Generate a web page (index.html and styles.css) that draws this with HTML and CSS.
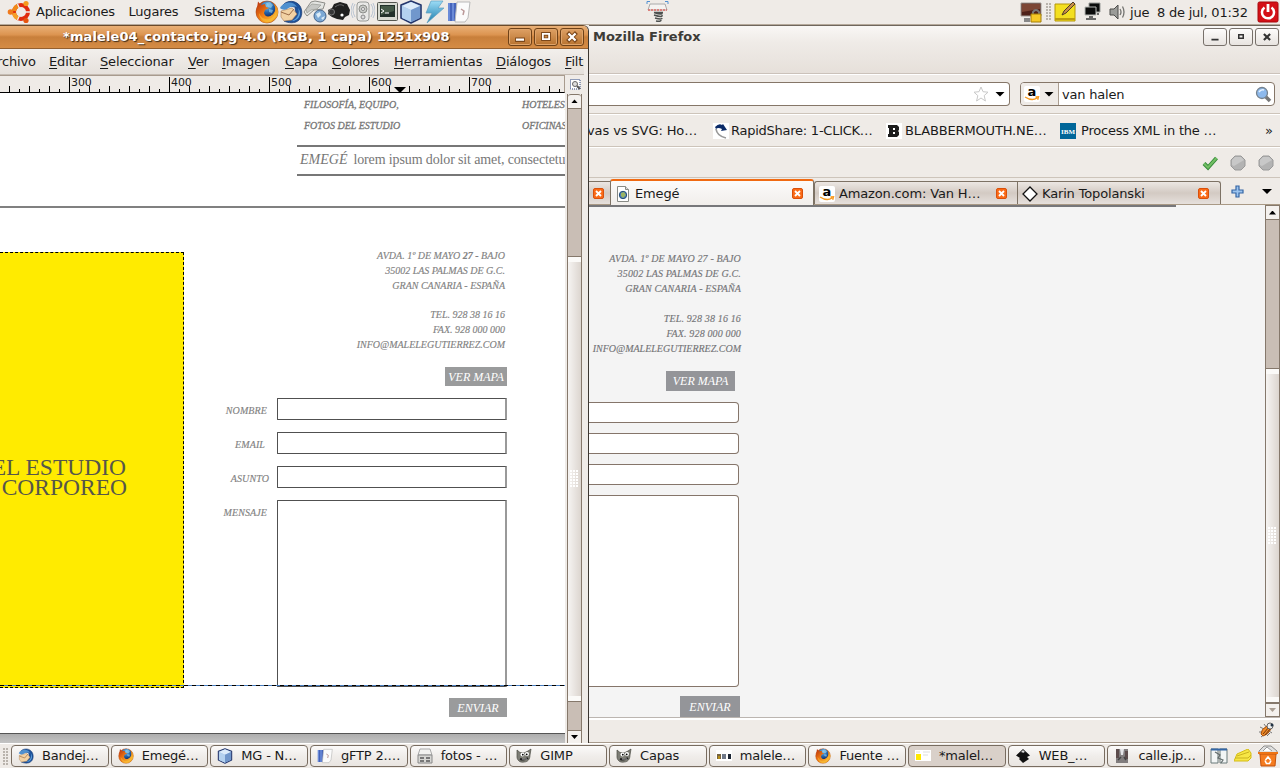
FILE: index.html
```html
<!DOCTYPE html>
<html lang="es">
<head>
<meta charset="utf-8">
<title>Escritorio</title>
<link rel="stylesheet" href="styles.css">
</head>
<body>
<svg class="defs" aria-hidden="true">
  <defs>
    <radialGradient id="g-globe" cx=".45" cy=".3" r=".7"><stop offset="0" stop-color="#78c5f0"/><stop offset=".6" stop-color="#2365ad"/><stop offset="1" stop-color="#12306e"/></radialGradient>
    <linearGradient id="g-fox" x1="0" y1="0" x2="1" y2="1"><stop offset="0" stop-color="#b52d0c"/><stop offset=".45" stop-color="#ee7a14"/><stop offset=".8" stop-color="#f5b32e"/><stop offset="1" stop-color="#d24d08"/></linearGradient>
    <linearGradient id="g-bolt" x1="0" y1="0" x2="0" y2="1"><stop offset="0" stop-color="#9cdcf6"/><stop offset="1" stop-color="#1c7cab"/></linearGradient>
  </defs>
  <symbol id="i-firefox" viewBox="0 0 24 24">
    <circle cx="12" cy="12" r="11" fill="url(#g-fox)" stroke="#a6400f" stroke-width=".6"/>
    <circle cx="12.500" cy="9" r="7.800" fill="url(#g-globe)"/>
    <path d="M11 3l4-1 3 3-2 3-3-1zM14 9l4 1-1 3-3-1z" fill="#9ed5ef" opacity=".6"/>
    <path d="M2 8L3 1.500l3 3.500 4-1 1 3 3 1-4 2-1 3c1 4 5 5 8 2 3-2 4-5 3-10 4 4 4 10 0 14-4 4-11 5-15 1-3-3-4-7-3-12z" fill="url(#g-fox)"/>
    <path d="M4 13c2 5 6 7 10 6 4-1 6-4 7-8 1 7-4 11-9 11-4 0-8-4-8-9z" fill="#f8ba38" opacity=".7"/>
  </symbol>
  <symbol id="i-thunder" viewBox="0 0 24 24">
    <path d="M4 5c4-5 13-5 17 1 3 5 2 11-1 14-4 4-11 3-15 1l8-3 4-4-1-7z" fill="#1f539b" stroke="#12336d" stroke-width=".7"/>
    <path d="M2 11l11-3 5 6-5 6-8 1-3-4z" fill="#f2d2a4" stroke="#a77a52" stroke-width=".6"/>
    <path d="M2 12l8 3 5-6" fill="none" stroke="#9c6b46"/>
    <path d="M1 8c3-6 13-8 17-1-5-1-7 0-10 2-2 1-5 1-7-1z" fill="#4f90cf"/>
    <path d="M19 8c2 5 0 10-6 13 6 0 11-7 6-13z" fill="#5fa3df"/>
  </symbol>
  <symbol id="i-cube" viewBox="0 0 24 24">
    <path d="M12 1l10 4v13l-10 5L2 18V5z" fill="#a9c5e8" stroke="#25376d" stroke-width="1.600" stroke-linejoin="round"/>
    <path d="M12 2l9 4-9 4-9-4z" fill="#dcebfa"/><path d="M12 10l9-4v12l-9 4z" fill="#7197cc"/><path d="M3 6l9 4v12l-9-4z" fill="#b4d1ef"/>
  </symbol>
  <symbol id="i-gftp" viewBox="0 0 24 24">
    <path d="M1 3h12v18H1z" fill="#6b8bd8"/><path d="M4 3v18M8 3v18" stroke="#3e5cb5" stroke-width="1.600"/>
    <path d="M10 2h13l-2 16-3 4H8z" fill="#fbfbfb" stroke="#b9b9b9"/><path d="M14 9l3 2-1 4" fill="none" stroke="#b99" stroke-width="1.500"/>
  </symbol>
  <symbol id="i-gimp" viewBox="0 0 16 16">
    <path d="M1 2l3 2.500L8 5l4-2 3-2-1 6c0 4-2 7-6 7-4 1-7-2-7-5z" fill="#7d7d75" stroke="#4a4a44" stroke-width=".7"/>
    <circle cx="6.500" cy="6.500" r="2" fill="#fff"/><circle cx="11" cy="6" r="2" fill="#fff"/><circle cx="6.800" cy="6.700" r=".9"/><circle cx="10.700" cy="6.300" r=".9"/>
    <path d="M4 11q4 1.500 8-1" stroke="#222" stroke-width="2" fill="none"/><path d="M6 11h5" stroke="#ccc" stroke-width=".8"/>
  </symbol>
  <symbol id="i-close" viewBox="0 0 11 11">
    <rect x=".5" y=".5" width="10" height="10" rx="1.500" fill="#fa6a16" stroke="#d9500c"/>
    <path d="M3 3l5 5M8 3L3 8" stroke="#fff" stroke-width="1.900"/>
  </symbol>
  <symbol id="i-amazon" viewBox="0 0 16 16">
    <rect width="16" height="16" rx="2" fill="#fff"/>
    <text x="3.500" y="10" font-family="DejaVu Sans" font-weight="bold" font-size="13">a</text>
    <path d="M1 11q7 4.600 12 1M11.500 11l3-.2-.8 3" fill="none" stroke="#f8991d" stroke-width="1.400"/>
  </symbol>
</svg>

<div class="desktop">
  <header class="panel">
    <svg class="ubuntu" viewBox="0 0 24 24"><circle cx="14" cy="12" r="7" fill="none" stroke="#e02c0e" stroke-width="4"/><path d="M7.100 11a7 7 0 0 1 4-5.400" fill="none" stroke="#f08a17" stroke-width="4"/><path d="M7.100 13a7 7 0 0 0 4 5.400" fill="none" stroke="#f5a128" stroke-width="4"/><path d="M10.500 4l2 4.500M10.500 20l2-4.500M18 12h5" stroke="#efebe7" stroke-width="1.300"/><circle cx="3.500" cy="12" r="2.800" fill="#f0791b"/><circle cx="19" cy="3.500" r="2.600" fill="#f59a1c"/><circle cx="19" cy="20.500" r="2.600" fill="#e6550f"/></svg>
    <nav class="panel-menu"><span>Aplicaciones</span><span>Lugares</span><span>Sistema</span></nav>
    <div class="launchers">
      <svg><use href="#i-firefox"/></svg>
      <svg><use href="#i-thunder"/></svg>
      <svg viewBox="0 0 24 24"><path d="M8 2l4-1 10 2-2 6-9 1-7 6-3-4z" fill="#e3e4e1" stroke="#8c8c88"/><path d="M3 9l6-5 9 1-4 4-6 1-4 3z" fill="#c6c7c4" stroke="#989994" stroke-width=".7"/><circle cx="17" cy="16" r="6" fill="#7ba8d5" stroke="#45648b"/><path d="M13 14l4-2 1 3-3 3zM18 18l4-2-2 4z" fill="#dcecf8"/></svg>
      <svg viewBox="0 0 24 24"><path d="M1 10l4-2 2-4 6-2 7 2 3 6-1 5-4 2-2 3-6-1-5-2-4-3z" fill="#20201f"/><circle cx="4.500" cy="12" r="3" fill="#353535" stroke="#777"/><circle cx="15" cy="15" r="1.600" fill="#fff"/><path d="M8 7q5-4 9-1" stroke="#666" fill="none"/></svg>
      <svg viewBox="0 0 24 24"><rect x="6" y="2" width="12" height="19" rx="3" fill="#e9e9e7" stroke="#999b98"/><circle cx="12" cy="9" r="4" fill="#c8cac6" stroke="#8c8e8a"/><circle cx="12" cy="9" r="1.500" fill="#fff" stroke="#888"/><circle cx="12" cy="17" r="2" fill="#ddd" stroke="#888"/><path d="M4 4Q0 10 4 17M20 4q4 6 0 13M2 3q-4 8 0 15M22 3q4 8 0 15" fill="none" stroke="#a9b9cc" stroke-width=".8"/></svg>
      <svg viewBox="0 0 24 24"><rect x="2.500" y="2.500" width="20" height="18" rx="1" fill="#d8dbd2" stroke="#555750"/><path d="M5 5h15v12H5z" fill="#22312a"/><path d="M6 6h13v5L6 15z" fill="#455a48"/><path d="M6 9l3 2-3 2M10 13h4" stroke="#fff" fill="none"/></svg>
      <svg><use href="#i-cube"/></svg>
      <svg viewBox="0 0 24 24"><path d="M8 1h12l-5 7h6L4 23l5-10H3z" fill="url(#g-bolt)" stroke="#5e9dc0" stroke-width=".7"/></svg>
      <svg><use href="#i-gftp"/></svg>
    </div>
    <svg class="spring" viewBox="0 0 24 24"><path d="M4 4h15l2 6H2z" fill="#f5f3f1" stroke="#aaa"/><path d="M2 10h19" stroke="#df6a64" stroke-width="1.500" stroke-dasharray="2 1"/><path d="M1 4V1.500h3M19 1.500h3V4" fill="none" stroke="#5090d2"/><path d="M8 12.500h9M8 12.500q9 3 8 0M8 15q9 3 8 0M9 18q7 2 7 0M10 21q5 1 5-1" stroke="#4c504f" stroke-width="1.500" fill="none"/></svg>
    <div class="tray">
      <svg class="t-lock" viewBox="0 0 22 22"><path d="M1 2h20v13H1z" fill="#4e2119" stroke="#a09a94"/><path d="M2 3h18v5L2 11z" fill="#7c4534"/><path d="M4 17h6v4H4z" fill="#888"/><path d="M13 14v-3q3-4 6 0v3" fill="none" stroke="#777" stroke-width="2"/><path d="M11 13h10v8H11z" fill="#f5c927" stroke="#a47e09"/></svg>
      <i class="grip"></i>
      <svg class="t-note" viewBox="0 0 22 20"><path d="M1 2h20v17H1z" fill="#f3df20" stroke="#b5960a"/><path d="M1 17h20" stroke="#bd9c0d" stroke-width="2"/><path d="M8 13l2-4L19 0l2 2-9 9z" fill="#c78e49" stroke="#4f3c27"/></svg>
      <svg class="t-net" viewBox="0 0 17 20"><path d="M5 1h11v9H5z" fill="#0b0c0c" stroke="#9a9c99"/><path d="M1 5h11v8H1z" fill="#0b0c0c" stroke="#b5b7b4"/><path d="M5 14h4v2h3v2H2v-2h3zM13 11h2v2h-2z" fill="#6a6a69"/></svg>
      <svg class="t-vol" viewBox="0 0 17 16"><path d="M1 5h4l4-4v14l-4-4H1z" fill="#9b9c99" stroke="#4c4c4a"/><path d="M11 5q2 3 0 6M13.500 2.500q3 5.500 0 11" fill="none" stroke="#737370" stroke-width="1.300"/></svg>
      <span class="clock">jue&nbsp; 8 de jul, 01:32</span>
      <svg class="t-power" viewBox="0 0 22 22"><rect x="1" y="1" width="20" height="20" rx="1.500" fill="#d41017" stroke="#a6090d"/><path d="M7.500 6.500a6 6 0 1 0 7 0" fill="none" stroke="#fff" stroke-width="2.500"/><path d="M11 3v8" stroke="#fff" stroke-width="2.800"/></svg>
    </div>
  </header>

  <main class="workspace">
    <section class="firefox">
      <div class="ff-title"><b>Mozilla Firefox</b>
        <div class="winbtns light">
          <svg viewBox="0 0 24 18"><path d="M8 12h8" stroke="#333" stroke-width="2"/></svg>
          <svg viewBox="0 0 24 18"><path d="M9.500 6.500h5v4h-5z" fill="none" stroke="#333" stroke-width="1.700"/></svg>
          <svg viewBox="0 0 24 18"><path d="M8.500 5.500l7 7M15.500 5.500l-7 7" stroke="#333" stroke-width="2.400"/></svg>
        </div>
      </div>
      <div class="ff-nav">
        <div class="urlbox"><svg class="star" viewBox="0 0 16 16"><path d="M8 1l2 4.700 5 .5-3.800 3.400L12.400 15 8 12l-4.400 3 1.200-5.400L1 6.200l5-.5z" fill="#fff" stroke="#c9c9c9"/></svg><i class="down"></i></div>
        <div class="searchbox"><div class="engine"><svg><use href="#i-amazon"/></svg><i class="down"></i></div><span>van halen</span>
          <svg class="lens" viewBox="0 0 17 17"><path d="M10 10l5 5" stroke="#777" stroke-width="3.500"/><circle cx="7" cy="7" r="5.500" fill="#8db9ec" stroke="#76838f" stroke-width="1.300"/><path d="M4 6q2-3 5-2" stroke="#e5f2ff" stroke-width="1.500" fill="none"/></svg></div>
      </div>
      <div class="ff-bookmarks">
        <span class="bm bm1">vas vs SVG: Ho…</span>
        <span class="bm bm2"><svg viewBox="0 0 16 16"><rect width="16" height="16" fill="#fff"/><path d="M2 4q4-4 7-2l1-1 4 6-6 1 1-2Q5 4 3 6z" fill="#0b2b68"/><path d="M3 6q1 7 10 9" fill="none" stroke="#999" stroke-width="1.700"/></svg>RapidShare: 1-CLICK…</span>
        <span class="bm bm3"><svg viewBox="0 0 16 16"><rect width="16" height="16" fill="#fff"/><path d="M2 2h9l2 2v3l-1 1 1 1v3l-2 2H2v-3h1V5H2z" fill="#1d1d1d"/><path d="M7 5h2v2H7zM7 9h2v2H7z" fill="#fff"/></svg>BLABBERMOUTH.NE…</span>
        <span class="bm bm4"><svg viewBox="0 0 16 16"><rect width="16" height="16" fill="#006699"/><text x="1" y="10.500" font-family="Liberation Serif" font-weight="bold" font-size="7" fill="#fff" textLength="14">IBM</text></svg>Process XML in the …</span>
        <span class="more">»</span>
      </div>
      <div class="ff-tools">
        <svg viewBox="0 0 16 16"><path d="M2 8.500l4 4L14.500 3" fill="none" stroke="#348939" stroke-width="4"/><path d="M2 8.500l4 4L14.500 3" fill="none" stroke="#72bf64" stroke-width="2.200"/></svg>
        <svg viewBox="0 0 16 16"><path d="M5 1h6l4 4v6l-4 4H5l-4-4V5z" fill="#b3b3b3" stroke="#999"/><path d="M5 2h6l3 3-10 6-2-1V5z" fill="#c8c8c8"/></svg>
        <svg viewBox="0 0 16 16"><path d="M5 1h6l4 4v6l-4 4H5l-4-4V5z" fill="#b3b3b3" stroke="#999"/><path d="M5 2h6l3 3-10 6-2-1V5z" fill="#c8c8c8"/></svg>
      </div>
      <div class="ff-tabs">
        <div class="tab stub"><svg class="x"><use href="#i-close"/></svg></div>
        <div class="tab active"><svg class="fav" viewBox="0 0 16 16"><path d="M2.500.5h8l3 3v12h-11z" fill="#fff" stroke="#888a85"/><path d="M10.500.5v3h3" fill="#ddd" stroke="#888a85"/><circle cx="8" cy="9" r="3.700" fill="#4d7fba" stroke="#264e78"/><path d="M6 7l3-1 2 3-3 3-2-2z" fill="#9bb463"/></svg><span>Emegé</span><svg class="x"><use href="#i-close"/></svg></div>
        <div class="tab"><svg class="fav"><use href="#i-amazon"/></svg><span>Amazon.com: Van H…</span><svg class="x"><use href="#i-close"/></svg></div>
        <div class="tab last"><svg class="fav" viewBox="0 0 16 16"><path d="M8 1l7 7-7 7-7-7z" fill="#fff" stroke="#111" stroke-width="1.300"/></svg><span>Karin Topolanski</span><svg class="x"><use href="#i-close"/></svg></div>
        <svg class="plus" viewBox="0 0 13 13"><path d="M5 1h3v4h4v3H8v4H5V8H1V5h4z" fill="#9cc4ef" stroke="#3465a4" stroke-width="1.200"/></svg><i class="down"></i>
      </div>
      <div class="ff-body">
        <div class="page">
          <div class="page-rule"></div>
          <address class="addr web">
            <span>AVDA. 1º DE MAYO 27 - BAJO</span><span>35002 LAS PALMAS DE G.C.</span><span>GRAN CANARIA - ESPAÑA</span><span>&nbsp;</span>
            <span>TEL. 928 38 16 16</span><span>FAX. 928 000 000</span><span class="mail">INFO@MALELEGUTIERREZ.COM</span>
          </address>
          <div class="btn web-map">VER MAPA</div>
          <div class="web-fields"><i></i><i></i><i></i><i class="area"></i></div>
          <div class="btn web-send">ENVIAR</div>
        </div>
        <div class="vbar ff-bar"><div class="arrow up"></div><div class="trough"></div><div class="thumb"></div><div class="arrow dn off"></div></div>
      </div>
      <div class="ff-status"><svg viewBox="0 0 17 16"><path d="M2 5l4 2M1 10l4 0M3 15l4-3M9 14l3-3M6 2l3 4M14 11l-3-2" stroke="#777"/><path d="M3 12q0-5 6-8l4 3q-3 6-8 7z" fill="#f28b25" stroke="#a34e0e"/><path d="M5 12l6-7M7 13l5-6" stroke="#6e3410"/><circle cx="12" cy="4" r="3" fill="#eee" stroke="#666"/><circle cx="14" cy="3" r="1.500" fill="#234"/></svg></div>
    </section>

    <section class="gimp">
      <div class="g-title"><b>*malele04_contacto.jpg-4.0 (RGB, 1 capa) 1251x908</b>
        <div class="winbtns dark">
          <svg viewBox="0 0 24 18"><path d="M6.500 12h11" stroke="#7b471a" stroke-width="5"/><path d="M7.500 12h9" stroke="#fff" stroke-width="2.600"/></svg>
          <svg viewBox="0 0 24 18"><path d="M8.500 5.500h7v6h-7z" fill="none" stroke="#7b471a" stroke-width="4"/><path d="M8.500 5.500h7v6h-7z" fill="none" stroke="#fff" stroke-width="2"/></svg>
          <svg viewBox="0 0 24 18"><path d="M7 4l10 10M17 4L7 14" stroke="#7b471a" stroke-width="4.600"/><path d="M8 5l8 8M16 5l-8 8" stroke="#fff" stroke-width="2.600"/></svg>
        </div>
      </div>
      <nav class="g-menu"><span class="m0">rchivo</span><span class="m1"><u>E</u>ditar</span><span class="m2"><u>S</u>eleccionar</span><span class="m3"><u>V</u>er</span><span class="m4"><u>I</u>magen</span><span class="m5"><u>C</u>apa</span><span class="m6"><u>C</u>olores</span><span class="m7"><u>H</u>erramientas</span><span class="m8"><u>D</u>iálogos</span><span class="m9"><u>F</u>iltros</span></nav>
      <div class="g-main">
        <div class="g-view">
          <div class="ruler"><span>300</span><span>400</span><span>500</span><span>600</span><span>700</span><i class="marker"></i></div>
          <div class="canvas">
            <div class="c-links"><div><p>FILOSOFÍA, EQUIPO,</p><p>FOTOS DEL ESTUDIO</p></div><div><p>HOTELES,</p><p>OFICINAS</p></div></div>
            <div class="c-lorem"><em>EMEGÉ</em><span>lorem ipsum dolor sit amet, consectetur</span></div>
            <div class="c-rule"></div>
            <div class="c-body">
              <div class="yellow"><p>EL ESTUDIO</p><p class="corp">CORPOREO</p></div>
              <div class="c-form">
                <address class="addr">
                  <span>AVDA. 1º DE MAYO <b>27 -</b> BAJO</span><span>35002 LAS PALMAS DE G.C.</span><span>GRAN CANARIA - ESPAÑA</span><span>&nbsp;</span>
                  <span>TEL. 928 38 16 16</span><span>FAX. 928 000 000</span><span>INFO@MALELEGUTIERREZ.COM</span>
                </address>
                <div class="btn g-map">VER MAPA</div>
                <div class="row"><label class="r1">NOMBRE</label><i></i></div>
                <div class="row"><label class="r2">EMAIL</label><i></i></div>
                <div class="row"><label class="r3">ASUNTO</label><i></i></div>
                <div class="row big"><label class="r4">MENSAJE</label><i></i></div>
                <div class="btn g-send">ENVIAR</div>
              </div>
            </div>
            <div class="guide"></div>
          </div>
          <div class="g-pad"></div>
        </div>
        <div class="g-side">
          <svg class="zoomcorner" viewBox="0 0 11 11"><rect x=".5" y=".5" width="9.500" height="9.500" fill="#fff" stroke="#27427e" stroke-dasharray="1 1"/><circle cx="5" cy="5" r="2.500" fill="#ddd" stroke="#666"/><path d="M7 7l3 3" stroke="#555" stroke-width="2"/></svg>
          <div class="vbar"><div class="arrow up"></div><div class="trough"></div><div class="thumb"></div><div class="trough low"></div><div class="arrow dn"></div></div>
        </div>
      </div>
    </section>
  </main>

  <footer class="taskbar">
    <i class="grip"></i>
    <div class="tasks">
      <div class="task"><svg><use href="#i-thunder"/></svg>Bandej…</div>
      <div class="task"><svg><use href="#i-firefox"/></svg>Emegé…</div>
      <div class="task"><svg><use href="#i-cube"/></svg>MG - N…</div>
      <div class="task"><svg><use href="#i-gftp"/></svg>gFTP 2.…</div>
      <div class="task"><svg viewBox="0 0 16 16"><path d="M3 1h10l2 6H1z" fill="#f2f2f0" stroke="#aaa"/><path d="M1 7h14v8H1z" fill="#d6d6d3" stroke="#888"/><path d="M3 9h4v2H3zM9 9h4v2H9zM3 12h4v2H3zM9 12h4v2H9z" fill="#777"/></svg>fotos - …</div>
      <div class="task"><svg><use href="#i-gimp"/></svg>GIMP</div>
      <div class="task"><svg><use href="#i-gimp"/></svg>Capas</div>
      <div class="task"><svg viewBox="0 0 16 16"><path d="M0 2h16v11H0z" fill="#fff"/><path d="M1 6h4v5H1z" fill="#766340"/><path d="M6 6h4v5H6z" fill="#6f7888"/><path d="M12 6h3v5h-3z" fill="#1b2432"/><path d="M2 8h2v3H2z" fill="#b58e17"/></svg>malele…</div>
      <div class="task"><svg><use href="#i-firefox"/></svg>Fuente …</div>
      <div class="task on"><svg viewBox="0 0 16 16"><path d="M0 2h16v11H0z" fill="#fff"/><path d="M1 6h5v6H1z" fill="#ffe800"/><path d="M1 4h4M8 4h7M8 7h5" stroke="#ddd"/></svg>*malel…</div>
      <div class="task"><svg viewBox="0 0 16 16"><path d="M8 1l7 6.500-3 1.500 2 2-6 4-4-4 1-1-4-2.500z" fill="#111"/><path d="M8 2L5.500 4.500 7 4l1 1 1.500-1 1 .5z" fill="#ddd"/></svg>WEB_…</div>
      <div class="task"><svg viewBox="0 0 16 16"><path d="M2 1h12v14H2z" fill="#817d7e"/><path d="M6 1h4l-1 6H7z" fill="#e5e5e8"/><path d="M2 1h3v9H2zM11 3h3v8h-3z" fill="#5c4c4c"/><path d="M4 12l3-3M12 12l-2-3" stroke="#444" stroke-width="1.500"/></svg>calle.jp…</div>
    </div>
    <svg class="a1" viewBox="0 0 18 18"><path d="M1 2h7v14H1zM10 2h7v14h-7z" fill="#f2f5f5" stroke="#6b7a7a"/><path d="M1 2.500h16" stroke="#3466a5" stroke-width="2"/><path d="M5 5l5 3-2 3 5 2-2 3" stroke="#626c6c" stroke-width="1.200" fill="none"/></svg>
    <svg class="a2" viewBox="0 0 18 13"><path d="M3 5L14 0l3 4v5l-3 3H0z" fill="#f7e645" stroke="#d4bd16"/><path d="M1 9h13l3-3M3 7l12-4" stroke="#cbb320" fill="none"/></svg>
    <svg class="a3" viewBox="0 0 20 22"><path d="M1 6l5-5 7 0 6 5v3H1z" fill="#e0e0df" stroke="#8c8c8b"/><path d="M5 6l4-4 5 4" fill="#fff" stroke="#999"/><path d="M2 9h16l-1 12H3z" fill="#f57c20" stroke="#c2520c"/><path d="M0 8h20" stroke="#ed7314" stroke-width="2"/><path d="M7.500 15l2.500-3 2.500 3M13 15.500l-1.500 3H8.500L7 15.500" fill="none" stroke="#fff" stroke-width="1.600"/></svg>
  </footer>
</div>
</body>
</html>
```
FILE: styles.css
```css
* { box-sizing: border-box; }
body { margin: 0; font: 13px/16px "DejaVu Sans", sans-serif; color: #1a1a1a; overflow: hidden; }
p { margin: 0; }
i, address, em { font-style: normal; }
svg { display: block; flex: none; }
.defs { position: absolute; width: 0; height: 0; }
.desktop { width: 1280px; height: 768px; display: flex; flex-direction: column; background: #efebe7; }

/* Top panel */
.panel { height: 25px; display: flex; align-items: center; background: #efebe7; border-bottom: 1px solid #b5a99b; }
.ubuntu { width: 24px; height: 24px; margin-left: 7px; }
.panel-menu { display: flex; flex: none; width: 224px; padding-left: 5px; letter-spacing: -.2px; }
.panel-menu span:nth-child(1) { width: 92.5px; }
.panel-menu span:nth-child(2) { width: 65.5px; }
.launchers { display: flex; width: 216px; }
.launchers svg { width: 24px; height: 24px; }
.spring { width: 24px; height: 24px; margin-left: 175px; }
.tray { margin-left: auto; display: flex; align-items: center; padding-right: 1px; }
.t-lock { width: 22px; height: 22px; }
.tray .grip { margin: 0 3px 0 4px; }
.t-note { width: 22px; height: 20px; }
.t-net { width: 17px; height: 20px; margin-left: 8px; }
.t-vol { width: 17px; height: 16px; margin-left: 8px; }
.clock { width: 127px; margin-left: 4px; padding-top: 1px; white-space: nowrap; letter-spacing: -.22px; }
.t-power { width: 22px; height: 22px; }
.grip { width: 5px; height: 18px; background: radial-gradient(circle at 1px 1px, #b9b3ac 0 .8px, transparent 1px) 0 0/3px 3px; }

.workspace { position: relative; height: 718px; overflow: hidden; }

/* Firefox window */
.firefox { position: absolute; left: 589px; top: 0; width: 691px; height: 718px; display: flex; flex-direction: column; background: #efebe7; border-top: 1px solid #6f665c; }
.firefox > div { flex: none; }
.ff-title { height: 48px; display: flex; padding: 2px 1px 0 4px; background: linear-gradient(#f9f7f5, #efebe7 35%, #e6e0da); border-bottom: 1px solid #cbc2ba; color: #3d3c38; line-height: 18px; }
.winbtns { display: flex; gap: 2px; margin-left: auto; }
.winbtns svg { width: 24px; height: 18px; border-radius: 3px; }
.light svg { border: 1px solid #77706a; background: linear-gradient(#fdfcfb, #e8e4e0); }
.ff-nav { height: 40px; padding: 7px 5px 0 0; display: flex; gap: 10px; border-bottom: 1px solid #cdc4ba; border-top: 1px solid #fff; }
.urlbox { width: 421px; height: 24px; border: solid #857668; border-width: 1px 1px 1px 0; border-radius: 0 4px 4px 0; background: #fff; display: flex; align-items: center; justify-content: flex-end; padding-right: 4px; gap: 6px; }
.star { width: 16px; height: 16px; }
.down { width: 10px; height: 5px; background: #000; clip-path: polygon(0 0, 100% 0, 50% 100%); }
.searchbox { width: 255px; height: 24px; border: 1px solid #857668; border-radius: 4px; background: #fff; display: flex; align-items: center; overflow: hidden; }
.engine { width: 38px; height: 22px; background: #efebe7; border-right: 1px solid #ab9e91; display: flex; align-items: center; gap: 4px; padding-left: 3px; }
.engine svg { width: 16px; height: 16px; }
.searchbox span { padding: 1px 0 0 3px; letter-spacing: -.2px; }
.lens { width: 17px; height: 17px; margin-left: auto; margin-right: 2px; }
.ff-bookmarks { height: 33px; display: flex; align-items: center; padding-top: 1px; border-top: 1px solid #fff; border-bottom: 1px solid #cdc4ba; white-space: nowrap; }
.bm { display: flex; align-items: center; gap: 3px; letter-spacing: -.2px; }
.bm svg { width: 16px; height: 16px; }
.bm1 { width: 124px; text-indent: -2px; overflow: hidden; letter-spacing: -.1px; }
.bm2 { width: 173px; gap: 2px; letter-spacing: -.25px; }
.bm3 { width: 174px; letter-spacing: -.15px; }
.bm4 { width: 205px; gap: 5px; }
.ff-tools { height: 31px; display: flex; justify-content: flex-end; align-items: center; gap: 12px; padding: 1px 6px 0 0; border-top: 1px solid #fff; border-bottom: 1px solid #cdc4ba; }
.ff-tools svg { width: 16px; height: 16px; }
.ff-tabs { height: 27px; display: flex; align-items: flex-end; border-bottom: 1px solid #a99985; }
.tab { width: 203px; height: 23px; display: flex; align-items: center; gap: 4px; padding: 1px 10px 0 4px; border: 1px solid #7d7265; border-width: 1px 0 0 1px; border-radius: 3px 0 0 0; background: linear-gradient(#ece7e3, #d3cac3 50%, #e6e0dc); letter-spacing: -.15px; white-space: nowrap; }
.tab .fav { width: 16px; height: 16px; }
.tab .x { width: 11px; height: 11px; margin-left: auto; }
.tab.stub { width: 21px; border-left: 0; border-radius: 0; }
.tab.active { width: 204px; height: 26px; margin-bottom: -1px; background: linear-gradient(#fcfbfa, #f1eeeb); border-top: 2px solid #f06a12; border-right: 1px solid #7d7265; border-radius: 3px 3px 0 0; }
.tab.last { width: 204px; border-right: 1px solid #7d7265; border-radius: 0 3px 0 0; padding-right: 11px; }
.plus { width: 13px; height: 13px; margin: 0 18px 6px 10px; }
.ff-tabs .down { margin-bottom: 10px; }
.ff-body { height: 513px; display: flex; }
.page { width: 676px; background: #f4f4f4; display: flex; flex-direction: column; overflow: hidden; }
.page > * { flex: none; }
.page-rule { width: 587px; height: 2px; background: #77777a; }
.ff-status { height: 25px; border-top: 2px solid #fff; border-bottom: 1px solid #a79a8c; padding: 2px 5px; display: flex; justify-content: flex-end; box-shadow: 0 -1px #bbb5b0; }
.ff-status svg { width: 17px; height: 16px; }

.addr { display: flex; flex-direction: column; align-items: flex-end; font: italic 10px/14.8px "Liberation Serif", serif; color: #828282; white-space: nowrap; -webkit-text-stroke: .15px #828282; }
.addr.web { width: 152px; margin-top: 44px; line-height: 15px; color: #707175; letter-spacing: .15px; }
.addr .mail { letter-spacing: 0; }
.btn { font: italic 12px/20px "Liberation Serif", serif; color: #fff; background: #949599; text-align: center; white-space: nowrap; }
.web-map { width: 69px; height: 20px; margin: 15px 0 0 77px; }
.web-fields { display: flex; flex-direction: column; gap: 10px; margin-top: 11px; }
.web-fields i { width: 150px; height: 21px; background: #fff; border: 1px solid #85756a; border-left: 0; border-radius: 0 4px 4px 0; }
.web-fields .area { height: 192px; }
.web-send { width: 60px; height: 22px; line-height: 22px; margin: 9px 0 0 91px; }

/* Scrollbars */
.vbar { width: 15px; display: flex; flex-direction: column; border: 1px solid #85786b; border-width: 0 1px; background: #efebe7; }
.arrow { height: 15px; border: 1px solid #85786b; border-width: 1px 0; background: #f4f1ee; display: flex; align-items: center; justify-content: center; }
.arrow::after { content: ""; width: 7px; height: 4px; background: #000; clip-path: polygon(0 100%, 50% 0, 100% 100%); }
.arrow.dn::after { clip-path: polygon(0 0, 50% 100%, 100% 0); }
.arrow.off::after { background: #a99e93; }
.trough { background: #c9beb5; }
.thumb { border: 1px solid #85786b; border-width: 1px 0; background: linear-gradient(#fbfaf8, #fbfaf8) 0 0/100% 5px no-repeat, linear-gradient(#fbfaf8, #fbfaf8) 0 100%/100% 5px no-repeat, linear-gradient(90deg, #f6f4f2, #dcd5cf); display: flex; align-items: center; justify-content: center; }
.thumb::after { content: ""; width: 9px; height: 18px; background: radial-gradient(circle at 1px 1px, #fff 0 .9px, #c5bcb3 1px, transparent 1.5px) 0 0/3px 3px; }
.ff-bar .trough { height: 148px; }
.ff-bar .thumb { height: 335px; }
.ff-bar .arrow.off { height: 14px; }

/* GIMP window */
.gimp { position: absolute; left: 0; top: 0; width: 589px; height: 718px; background: #efebe7; border-right: 1px solid #3b3631; border-top: 1px solid #6b4a2a; border-top-right-radius: 6px; display: flex; flex-direction: column; overflow: hidden; }
.g-title { height: 23px; display: flex; padding: 2px 4px 0 63px; background: linear-gradient(#e9b077, #dc9450 40%, #c87f3b 50%, #d58c45); border-bottom: 1px solid #94602f; color: #fff; line-height: 18px; white-space: nowrap; text-shadow: 1px 1px 1px #3a2a1a; letter-spacing: .11px; }
.dark svg { border: 1px solid #6f4218; background: linear-gradient(#dea064, #b8732f); box-shadow: inset 0 0 0 1px #dfa46b; }
.g-menu { height: 26px; display: flex; padding-top: 5px; border-bottom: 1px solid #c5bcb3; background: linear-gradient(#f2efec, #e6e1dc); white-space: nowrap; letter-spacing: -.15px; width: 584px; overflow: hidden; }
.g-menu u { text-underline-offset: 2px; text-decoration-thickness: 1px; }
.g-menu span { flex: none; }
.m0 { width: 49px; text-indent: -3px; } .m1 { width: 51px; } .m2 { width: 88px; } .m3 { width: 34px; } .m4 { width: 63px; }
.m5 { width: 47px; } .m6 { width: 62px; } .m7 { width: 102px; letter-spacing: 0; } .m8 { width: 69px; }
.g-main { height: 668px; display: flex; }
.g-view { width: 565px; display: flex; flex-direction: column; }
.ruler { position: relative; height: 18px; display: flex; padding-left: 71px; border-top: 1px solid #a89b8e; border-right: 1px solid #a89b8e; border-bottom: 1px solid #000; font-size: 11px; line-height: 13px; letter-spacing: -.1px; overflow: hidden;
  background: linear-gradient(90deg, #000 1px, transparent 0) 69px 1px/100px 16px repeat-x, linear-gradient(90deg, #000 1px, transparent 0) 9px 10px/20px 7px repeat-x, linear-gradient(90deg, #000 1px, transparent 0) 19px 13px/20px 4px repeat-x, #efebe7; }
.ruler span { width: 100px; flex: none; }
.marker { position: absolute; left: 394px; top: 11px; width: 12px; height: 6px; background: #000; clip-path: polygon(0 0, 100% 0, 50% 100%); }
.canvas { position: relative; height: 640px; background: #fff; overflow: hidden; font-family: "Liberation Serif", serif; color: #777; }
.g-pad { height: 10px; border-top: 1px solid #555; background: linear-gradient(#adadad, #c4c4c4); }
.c-links { display: flex; padding: 1px 0 0 304px; height: 52px; font: italic 10px/21px "Liberation Serif", serif; white-space: nowrap; color: #777; -webkit-text-stroke: .3px #777; }
.c-links > div:first-child { width: 218px; flex: none; }
.c-lorem { margin-left: 297px; height: 31px; border-top: 2px solid #777; border-bottom: 2px solid #777; padding-left: 3px; display: flex; gap: 6px; font-size: 14px; line-height: 25px; white-space: nowrap; letter-spacing: -.13px; }
.c-lorem em { font-style: italic; letter-spacing: 0; }
.c-rule { height: 2px; margin-top: 30px; background: #808080; }
.c-body { display: flex; }
.yellow { width: 184px; height: 436px; margin-top: 44px; background: #ffeb00; padding: 204px 57px 0 0; font-size: 23.5px; line-height: 20px; color: #57564a; display: flex; flex-direction: column; align-items: flex-end; white-space: nowrap; border: 1px dashed #000; border-left: 0; }
.yellow .corp { margin-right: -1px; }
.c-form { width: 323px; display: flex; flex-direction: column; align-items: flex-end; padding-top: 41px; }
.c-form .addr { padding-right: 2px; }
.c-form > * { flex: none; }
.g-map { width: 62px; height: 19px; line-height: 20px; margin: 14px 0 12px; background: #9a9b9c; }
.row { width: 284px; height: 22px; display: flex; margin-bottom: 12px; font: italic 10px/25px "Liberation Serif", serif; color: #828282; letter-spacing: .1px; -webkit-text-stroke: .15px #828282; }
.row i { width: 230px; height: 22px; flex: none; border: 1px solid #505050; border-right: 2px solid #999; border-radius: 1px; background: #fff; }
.row label { flex: none; width: 54px; text-align: right; padding-right: 10px; }
.row .r2 { padding-right: 12px; } .row .r3 { padding-right: 8px; }
.row.big, .row.big i { height: 187px; margin-bottom: 0; }
.g-send { width: 58px; height: 19px; margin-top: 11px; background: #9a9b9c; }
.guide { position: absolute; left: 0; right: 0; top: 592px; height: 1px; background: repeating-linear-gradient(90deg, #000 0 4px, #4a7fc0 4px 8px); }
.g-side { width: 23px; padding: 5px 0 0 2px; display: flex; flex-direction: column; }
.zoomcorner { width: 11px; height: 11px; margin: -1px 0 4px 3px; }
.g-side .vbar { height: 649px; }
.g-side .arrow.up { border-radius: 3px 3px 0 0; height: 15px; }
.g-side .trough { height: 147px; }
.g-side .thumb { height: 448px; }
.g-side .trough.low { height: 28px; }
.g-side .arrow.dn { height: 13px; border-bottom: 0; }

/* Taskbar */
.taskbar { height: 25px; display: flex; align-items: flex-start; border-top: 1px solid #fff; background: #efebe7; padding: 1px 0 0 3px; }
.taskbar .grip { margin-top: 3px; }
.tasks { display: flex; gap: 2px; width: 1194px; margin-left: 3px; }
.task { flex: 1 1 0; min-width: 0; height: 22px; display: flex; align-items: center; gap: 8px; padding-left: 6px; border: 1px solid #786c60; border-radius: 4px; background: linear-gradient(#fbfaf9, #f0edea 50%, #e9e5e1); white-space: nowrap; letter-spacing: -.2px; }
.task.on { background: #d9d0c9; }
.task svg { width: 16px; height: 16px; }
.a1 { width: 18px; height: 18px; margin: 2px 0 0 5px; }
.a2 { width: 18px; height: 13px; margin: 4px 0 0 6px; }
.a3 { width: 20px; height: 22px; margin-left: 6px; }
```
